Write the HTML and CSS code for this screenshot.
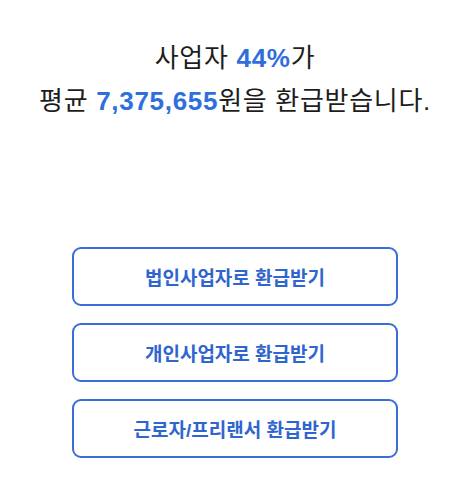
FILE: index.html
```html
<!DOCTYPE html>
<html lang="ko">
<head>
<meta charset="utf-8">
<title>환급 안내</title>
<link rel="stylesheet" href="styles.css">
</head>
<body>
<main class="page">
  <section class="headline">
    <p class="line">사업자 <strong class="hl">44%</strong>가</p>
    <p class="line">평균 <strong class="hl">7,375,655</strong>원을 환급받습니다.</p>
  </section>
  <nav class="actions">
    <button class="btn" type="button">법인사업자로 환급받기</button>
    <button class="btn" type="button">개인사업자로 환급받기</button>
    <button class="btn" type="button">근로자/프리랜서 환급받기</button>
  </nav>
</main>
</body>
</html>
```

FILE: styles.css
```css
* { box-sizing: border-box; }

html, body {
  margin: 0;
  background: #ffffff;
}

body {
  font-family: "Liberation Sans", "Noto Sans CJK KR", sans-serif;
  color: #1d1d1d;
}

.page {
  width: 460px;
  height: 490px;
  display: flex;
  flex-direction: column;
  align-items: center;
  padding-top: 37px;
  padding-left: 10px;
}

.headline {
  text-align: center;
}

.line {
  margin: 0;
  font-size: 26px;
  line-height: 43px;
  letter-spacing: 0.7px;
}

.hl {
  color: #2f6fdc;
  font-weight: 700;
}

.actions {
  margin-top: 124px;
  display: flex;
  flex-direction: column;
  gap: 17px;
}

.btn {
  width: 326px;
  height: 59px;
  border: 2px solid #3a6dd6;
  border-radius: 9px;
  background: #ffffff;
  color: #2f65cf;
  font-family: "Liberation Sans", "Noto Sans CJK KR", sans-serif;
  font-size: 19px;
  font-weight: 700;
  padding: 0;
  cursor: pointer;
}
```
